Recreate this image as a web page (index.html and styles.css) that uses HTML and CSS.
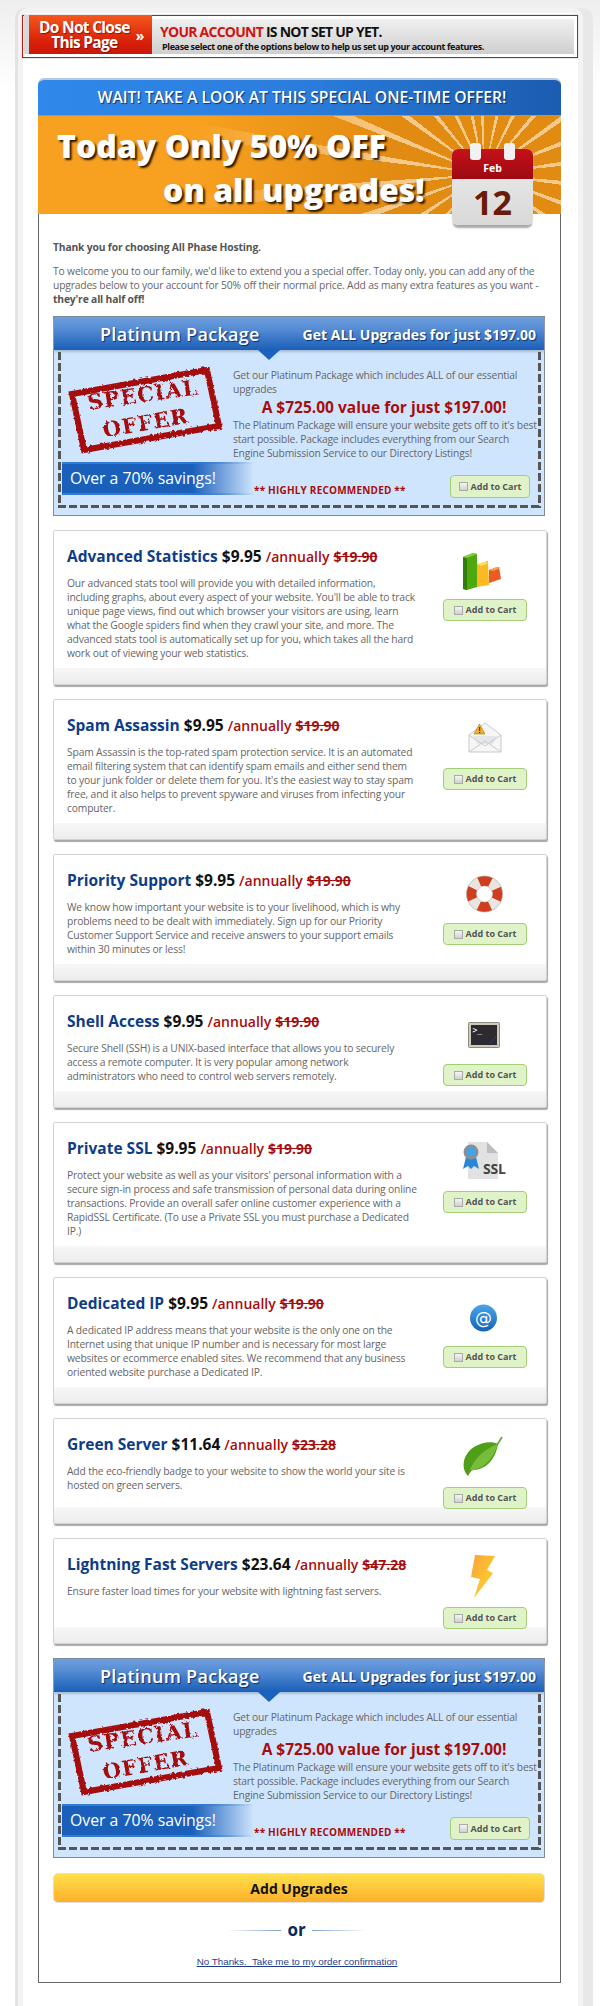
FILE: index.html
```html
<!DOCTYPE html>
<html lang="en">
<head>
<meta charset="utf-8">
<title>Special one-time offer</title>
<link rel="stylesheet" href="styles.css">
</head>
<body>
<div class="frame">
  <header class="alert">
    <div class="alert-tab"><span class="alert-tab-text">Do Not Close<br>This Page</span><span class="alert-arrows">»</span></div>
    <div class="alert-msg">
      <p class="alert-head"><span class="alert-red">YOUR ACCOUNT</span> IS NOT SET UP YET.</p>
      <p class="alert-sub">Please select one of the options below to help us set up your account features.</p>
    </div>
  </header>

  <main class="box">
    <div class="wait">WAIT! TAKE A LOOK AT THIS SPECIAL ONE-TIME OFFER!</div>
    <div class="hero">
      <h1 class="hero-title"><span class="hero-l1">Today Only 50% OFF</span><span class="hero-l2">on all upgrades!</span></h1>
      <div class="cal">
        <i class="cal-ring cal-ring-a"></i><i class="cal-ring cal-ring-b"></i>
        <div class="cal-top">Feb</div>
        <div class="cal-day">12</div>
      </div>
    </div>

    <div class="content">
      <p class="thanks">Thank you for choosing All Phase Hosting.</p>
      <p class="intro">To welcome you to our family, we'd like to extend you a special offer. Today only, you can add any of the upgrades below to your account for 50% off their normal price. Add as many extra features as you want - <b>they're all half off!</b></p>

      <section class="plat">
        <div class="plat-head"><span class="plat-title">Platinum Package</span><span class="plat-sub">Get ALL Upgrades for just $197.00</span></div>
        <div class="plat-body">
          <div class="plat-main">
            <svg class="stamp" viewBox="0 0 160 90" width="160" height="90" aria-hidden="true">
              <defs><filter id="rough" x="-5%" y="-5%" width="110%" height="110%"><feTurbulence type="fractalNoise" baseFrequency=".3" numOctaves="2" seed="4"/><feDisplacementMap in="SourceGraphic" scale="3.5"/></filter></defs>
              <g class="stamp-ink">
                <polygon class="stamp-box" points="6,28 141,4 153,60 18,84"/>
                <text class="stamp-text" x="78" y="36" transform="rotate(-8 78 36)">SPECIAL</text>
                <text class="stamp-text" x="81" y="64" transform="rotate(-10 81 64)">OFFER</text>
              </g>
            </svg>
            <div class="plat-text">
              <p>Get our Platinum Package which includes ALL of our essential upgrades</p>
              <p class="plat-value">A $725.00 value for just $197.00!</p>
              <p>The Platinum Package will ensure your website gets off to it's best start possible. Package includes everything from our Search Engine Submission Service to our Directory Listings!</p>
            </div>
          </div>
          <div class="plat-foot">
            <div class="savings">Over a 70% savings!</div>
            <div class="reco">** HIGHLY RECOMMENDED **</div>
            <label class="cart cart-plat"><input type="checkbox" class="check">Add to Cart</label>
          </div>
          <div class="dash"></div>
        </div>
      </section>

      <article class="card">
        <div class="card-text">
          <h2 class="card-title"><span class="name">Advanced Statistics</span> <span class="price">$9.95</span> <span class="per">/annually</span> <s class="old">$19.90</s></h2>
          <p>Our advanced stats tool will provide you with detailed information, including graphs, about every aspect of your website. You'll be able to track unique page views, find out which browser your visitors are using, learn what the Google spiders find when they crawl your site, and more. The advanced stats tool is automatically set up for you, which takes all the hard work out of viewing your web statistics.</p>
        </div>
        <div class="card-side">
          <svg class="icon" viewBox="0 0 50 50" width="50" height="50" aria-hidden="true">
            <polygon points="3,12 13,8 17,9 17,42 7,45 3,44" fill="#4fa80f"/><polygon points="3,12 7,13 7,45 3,44" fill="#2f7f08"/><polygon points="3,12 13,8 17,9 7,13" fill="#86cf3c"/>
            <polygon points="17,19 28,16 29,40 17,42" fill="#fbb924"/><polygon points="17,19 24,17 29,18 21,21" fill="#ffe069"/>
            <polygon points="29,25 39,22 41,34 29,38" fill="#ea5a22"/><polygon points="29,25 36,22 41,23 33,26" fill="#f9a04a"/>
          </svg>
          <label class="cart"><input type="checkbox" class="check">Add to Cart</label>
        </div>
      </article>

      <article class="card">
        <div class="card-text">
          <h2 class="card-title"><span class="name">Spam Assassin</span> <span class="price">$9.95</span> <span class="per">/annually</span> <s class="old">$19.90</s></h2>
          <p>Spam Assassin is the top-rated spam protection service. It is an automated email filtering system that can identify spam emails and either send them to your junk folder or delete them for you. It's the easiest way to stay spam free, and it also helps to prevent spyware and viruses from infecting your computer.</p>
        </div>
        <div class="card-side">
          <svg class="icon" viewBox="0 0 50 50" width="50" height="50" aria-hidden="true">
            <polygon points="9,21 25,9 41,21 41,38 9,38" fill="#f6f6f6" stroke="#c6c9cc"/>
            <polygon points="13,22 37,22 33,30 17,30" fill="#e4e7e9"/>
            <path d="M9 38 L25 27 L41 38 M9 21 L25 32 L41 21" fill="none" stroke="#c6c9cc"/>
            <polygon points="19.5,10 25,20 14,20" fill="#f2b01e" stroke="#a9781a" stroke-width=".6"/>
            <rect x="19" y="13" width="1.2" height="4" fill="#5a3a08"/><rect x="19" y="18" width="1.2" height="1.2" fill="#5a3a08"/>
          </svg>
          <label class="cart"><input type="checkbox" class="check">Add to Cart</label>
        </div>
      </article>

      <article class="card">
        <div class="card-text">
          <h2 class="card-title"><span class="name">Priority Support</span> <span class="price">$9.95</span> <span class="per">/annually</span> <s class="old">$19.90</s></h2>
          <p>We know how important your website is to your livelihood, which is why problems need to be dealt with immediately. Sign up for our Priority Customer Support Service and receive answers to your support emails within 30 minutes or less!</p>
        </div>
        <div class="card-side">
          <svg class="icon" viewBox="0 0 50 50" width="50" height="50" aria-hidden="true">
            <circle cx="24.5" cy="25" r="13" fill="none" stroke="#e9e6e2" stroke-width="10"/>
            <circle cx="24.5" cy="25" r="13" fill="none" stroke="#cf3e1e" stroke-width="10" stroke-dasharray="11.5 8.9" stroke-dashoffset="5.75"/>
            <circle cx="24.5" cy="25" r="18" fill="none" stroke="#a9a29a" stroke-width=".6"/>
            <circle cx="24.5" cy="25" r="8" fill="#fff" stroke="#b9b2aa" stroke-width=".6"/>
          </svg>
          <label class="cart"><input type="checkbox" class="check">Add to Cart</label>
        </div>
      </article>

      <article class="card">
        <div class="card-text">
          <h2 class="card-title"><span class="name">Shell Access</span> <span class="price">$9.95</span> <span class="per">/annually</span> <s class="old">$19.90</s></h2>
          <p>Secure Shell (SSH) is a UNIX-based interface that allows you to securely access a remote computer. It is very popular among network administrators who need to control web servers remotely.</p>
        </div>
        <div class="card-side">
          <svg class="icon" viewBox="0 0 50 50" width="50" height="50" aria-hidden="true">
            <rect x="8.5" y="12.5" width="31" height="25" rx="1" fill="#cfcabb" stroke="#8f8b7e"/>
            <rect x="11" y="15" width="26" height="20" fill="#2c2b31"/>
            <text class="term-text" x="12.5" y="23">&gt;_</text>
            <path d="M30 33 L36 27" stroke="#3a5fb0" stroke-dasharray="1 1.5"/>
          </svg>
          <label class="cart"><input type="checkbox" class="check">Add to Cart</label>
        </div>
      </article>

      <article class="card">
        <div class="card-text">
          <h2 class="card-title"><span class="name">Private SSL</span> <span class="price">$9.95</span> <span class="per">/annually</span> <s class="old">$19.90</s></h2>
          <p>Protect your website as well as your visitors' personal information with a secure sign-in process and safe transmission of personal data during online transactions. Provide an overall safer online customer experience with a RapidSSL Certificate. (To use a Private SSL you must purchase a Dedicated IP.)</p>
        </div>
        <div class="card-side">
          <svg class="icon" viewBox="0 0 50 50" width="50" height="50" aria-hidden="true">
            <path d="M8 5 H27 L38 16 V42 H8 Z" fill="#e2e2e2"/><path d="M27 5 L38 16 H27 Z" fill="#bdbdbd"/>
            <polygon points="6,20 3,32 8,29 11,32 14,29 19,32 16,20" fill="#2b86d8"/>
            <circle cx="11" cy="15" r="7.5" fill="#8b8f94"/><circle cx="11" cy="15" r="4.5" fill="#3fa4ea"/>
            <text class="ssl-text" x="23" y="37">SSL</text>
          </svg>
          <label class="cart"><input type="checkbox" class="check">Add to Cart</label>
        </div>
      </article>

      <article class="card">
        <div class="card-text">
          <h2 class="card-title"><span class="name">Dedicated IP</span> <span class="price">$9.95</span> <span class="per">/annually</span> <s class="old">$19.90</s></h2>
          <p>A dedicated IP address means that your website is the only one on the Internet using that unique IP number and is necessary for most large websites or ecommerce enabled sites. We recommend that any business oriented website purchase a Dedicated IP.</p>
        </div>
        <div class="card-side">
          <svg class="icon" viewBox="0 0 50 50" width="50" height="50" aria-hidden="true">
            <defs><linearGradient id="at" x1="0" y1="0" x2="0" y2="1"><stop offset="0" stop-color="#4aa6ea"/><stop offset="1" stop-color="#1562b4"/></linearGradient></defs>
            <circle cx="23.5" cy="26" r="13.5" fill="url(#at)"/>
            <text class="at-text" x="23.5" y="32">@</text>
          </svg>
          <label class="cart"><input type="checkbox" class="check">Add to Cart</label>
        </div>
      </article>

      <article class="card">
        <div class="card-text">
          <h2 class="card-title"><span class="name">Green Server</span> <span class="price">$11.64</span> <span class="per">/annually</span> <s class="old">$23.28</s></h2>
          <p>Add the eco-friendly badge to your website to show the world your site is hosted on green servers.</p>
        </div>
        <div class="card-side">
          <svg class="icon" viewBox="0 0 50 50" width="50" height="50" aria-hidden="true">
            <path d="M8 43 C1 36 2 22 14 14 C22 9 32 8 38 11 C36 24 28 36 14 37 C11 37 10 40 8 43 Z" fill="#4f9f18"/>
            <path d="M10 37 C14 26 24 16 38 11 C34 24 26 34 14 37 Z" fill="#76bd3c"/>
            <path d="M37 12 L42 4" stroke="#5fa825" stroke-width="1.6"/>
          </svg>
          <label class="cart"><input type="checkbox" class="check">Add to Cart</label>
        </div>
      </article>

      <article class="card">
        <div class="card-text">
          <h2 class="card-title"><span class="name">Lightning Fast Servers</span> <span class="price">$23.64</span> <span class="per">/annually</span> <s class="old">$47.28</s></h2>
          <p>Ensure faster load times for your website with lightning fast servers.</p>
        </div>
        <div class="card-side">
          <svg class="icon" viewBox="0 0 50 50" width="50" height="50" aria-hidden="true">
            <defs><linearGradient id="bolt" x1="0" y1="0" x2="1" y2="1"><stop offset="0" stop-color="#f6a23c"/><stop offset=".6" stop-color="#ffc42e"/><stop offset="1" stop-color="#f39a12"/></linearGradient></defs>
            <polygon points="15,2 35,3 27,17 33,20 14,45 20,26 11,24" fill="url(#bolt)"/>
          </svg>
          <label class="cart"><input type="checkbox" class="check">Add to Cart</label>
        </div>
      </article>

      <section class="plat plat-last">
        <div class="plat-head"><span class="plat-title">Platinum Package</span><span class="plat-sub">Get ALL Upgrades for just $197.00</span></div>
        <div class="plat-body">
          <div class="plat-main">
            <svg class="stamp" viewBox="0 0 160 90" width="160" height="90" aria-hidden="true">
              <g class="stamp-ink">
                <polygon class="stamp-box" points="6,28 141,4 153,60 18,84"/>
                <text class="stamp-text" x="78" y="36" transform="rotate(-8 78 36)">SPECIAL</text>
                <text class="stamp-text" x="81" y="64" transform="rotate(-10 81 64)">OFFER</text>
              </g>
            </svg>
            <div class="plat-text">
              <p>Get our Platinum Package which includes ALL of our essential upgrades</p>
              <p class="plat-value">A $725.00 value for just $197.00!</p>
              <p>The Platinum Package will ensure your website gets off to it's best start possible. Package includes everything from our Search Engine Submission Service to our Directory Listings!</p>
            </div>
          </div>
          <div class="plat-foot">
            <div class="savings">Over a 70% savings!</div>
            <div class="reco">** HIGHLY RECOMMENDED **</div>
            <label class="cart cart-plat"><input type="checkbox" class="check">Add to Cart</label>
          </div>
          <div class="dash"></div>
        </div>
      </section>

      <button class="add" type="button">Add Upgrades</button>
      <div class="or"><span class="or-line or-left"></span><span class="or-word">or</span><span class="or-line or-right"></span></div>
      <p class="nothanks"><a href="#">No Thanks.&nbsp; Take me to my order confirmation</a></p>
    </div>
  </main>
</div>
</body>
</html>
```

FILE: styles.css
```css
* { box-sizing: border-box; }
html, body { margin: 0; padding: 0; }
body {
  background: linear-gradient(#eeeeee, #ffffff 90px) no-repeat;
  font-family: "Open Sans", sans-serif;
  font-size: 10.3px;
  line-height: 14px;
  letter-spacing: -.16px;
  color: #666;
}
p { margin: 0; }

.frame {
  margin: 8px 17px 0 18px;
  padding: 2px 0 24px;
  background: #fff;
  border: 5px solid #f3f3f3;
  border-bottom: 0;
  border-radius: 10px 10px 0 0;
  box-shadow: -3px 0 0 #e3e3e3, 10px 0 0 #e8e8e8;
}

/* alert bar */
.alert {
  display: flex;
  height: 43px;
  margin-left: -1px;
  padding: 1px;
  background: #fff;
  border: 1px solid #d3130f;
  outline: 1px solid #e8e8e8;
}
.alert-tab {
  display: flex;
  align-items: center;
  flex: none;
  width: 123px;
  margin: -2px 0 2px 5px;
  padding-left: 10px;
  background: linear-gradient(#f4581e, #d81f08 70%, #c9190a);
  color: #fff;
  box-shadow: -5px 0 0 #d8d8d8;
}
.alert-tab-text {
  font-weight: 700;
  font-size: 15.5px;
  line-height: 15px;
  letter-spacing: -.7px;
  text-align: center;
  text-shadow: 1px 1px 1px rgba(90,0,0,.6);
}
.alert-arrows { margin-left: 6px; font-size: 14px; font-weight: 700; line-height: 14px; padding-top: 2px; }
.alert-msg {
  flex: 1;
  padding: 5px 0 0 8px;
  background: linear-gradient(#f0f0f0, #cfcfcf);
  border: 2px solid #fff;
  border-left: 0;
  color: #111;
}
.alert-head { font-size: 14px; line-height: 16px; font-weight: 700; letter-spacing: -.75px; }
.alert-red { color: #d3130f; }
.alert-sub { font-size: 9px; line-height: 13px; font-weight: 700; letter-spacing: -.38px; margin-left: 2px; }

/* outer box */
.box {
  width: 523px;
  margin: 20px 0 0 15px;
  border: 1px solid #666;
  border-top: 0;
  border-radius: 7px 7px 0 0;
}
.wait {
  height: 37px;
  margin: 0 -1px;
  padding-left: 5px;
  border-top: 2px solid #b7cbe0;
  border-radius: 7px 7px 0 0;
  background: linear-gradient(to right, #2f88ea, #2b7ddd 50%, #1a5cb0);
  color: #fff;
  font-weight: 600;
  font-size: 15.7px;
  letter-spacing: 0;
  line-height: 35px;
  text-align: center;
  text-shadow: 1px 1px 1px rgba(0,30,80,.8);
}
.hero {
  position: relative;
  height: 99px;
  margin: 0 -1px;
  padding-top: 8px;
  border-top: 1px solid #6aa3de;
  background:
    linear-gradient(to right, #f8a01f 30%, rgba(248,160,31,0) 68%),
    repeating-conic-gradient(from -3deg at 446px 58px, #f5c98a 0 3deg, rgba(0,0,0,0) 3deg 14deg),
    #e28b12;
}
.hero-title {
  margin: 0;
  color: #fff;
  font-weight: 800;
  font-size: 32px;
  letter-spacing: 0;
  line-height: 44px;
  text-shadow: 2px 2px 2px #2b1600;
}
.hero-l1, .hero-l2 { display: block; white-space: nowrap; }
.hero-l1 { padding-left: 19px; }
.hero-l2 { padding-left: 125px; }

/* calendar */
.cal {
  position: absolute;
  left: 414px;
  top: 33px;
  width: 81px;
  height: 76px;
  border-radius: 6px;
  background: linear-gradient(#ececec, #d9d9d9);
  box-shadow: 0 4px 2px -1px #a9a9a9;
  letter-spacing: 0;
}
.cal-top {
  height: 30px;
  padding-top: 12px;
  border-radius: 6px 6px 0 0;
  background: linear-gradient(#c7111a, #9c0a12);
  color: #fff;
  font-weight: 700;
  font-size: 10.5px;
  line-height: 14px;
  text-align: center;
}
.cal-day {
  color: #6a1a08;
  font-weight: 700;
  font-size: 34px;
  line-height: 46px;
  text-align: center;
}
.cal-ring {
  position: absolute;
  top: -6px;
  width: 11px;
  height: 17px;
  border-radius: 3px;
  background: #f1f1f1;
}
.cal-ring-a { left: 18px; }
.cal-ring-b { left: 52px; }

/* content */
.content { padding: 26px 13px 0 14px; }
.thanks { font-weight: 700; color: #555; }
.intro { margin-top: 10px; width: 494px; }
.intro b { color: #555; }

/* platinum */
.plat {
  width: 492px;
  margin: 10px 0 14px;
  border: 1px solid #7f8a99;
  background: #cfe5fd;
}
.plat-last { margin: 14px 0 0; }
.plat-head {
  position: relative;
  display: flex;
  justify-content: space-between;
  align-items: center;
  height: 33px;
  padding: 0 8px 0 46px;
  background: linear-gradient(#6d9fde, #5b90d6 30%, #1a5fb8);
  color: #fff;
  letter-spacing: 0;
  text-shadow: 1px 1px 1px rgba(0,30,80,.8);
  box-shadow: 0 2px 2px #a9bdd5;
}
.plat-head::after {
  content: "";
  position: absolute;
  left: 204px;
  top: 33px;
  border: 11px solid transparent;
  border-top: 10px solid #1a62bd;
  border-bottom: 0;
}
.plat-title { font-weight: 600; font-size: 18px; letter-spacing: .3px; }
.plat-sub { font-weight: 700; font-size: 14px; padding-top: 2px; }
.plat-body { position: relative; height: 165px; padding-top: 18px; }
.plat-main { display: flex; }
.stamp { flex: none; display: block; margin: -2px 7px -2px 12px; }
.stamp-ink { filter: url(#rough); }
.stamp-box { fill: none; stroke: #a50a0e; stroke-width: 6; }
.stamp-text {
  fill: #a50a0e;
  font-family: "DejaVu Serif", serif;
  font-weight: 700;
  font-size: 21px;
  letter-spacing: 1px;
  text-anchor: middle;
}
.plat-text { width: 305px; }
.plat-value {
  color: #a80d0d;
  font-weight: 700;
  font-size: 15.5px;
  letter-spacing: 0;
  line-height: 22px;
  text-align: center;
  padding-right: 3px;
}
.plat-foot {
  display: flex;
  align-items: flex-end;
  height: 36px;
  margin-top: 2px;
}
.savings {
  align-self: flex-start;
  width: 192px;
  height: 33px;
  margin-left: 8px;
  padding-left: 8px;
  border-top: 2px solid #3a80d8;
  border-bottom: 2px solid #3a80d8;
  border-image: linear-gradient(to right, #2f7bd6 60%, rgba(47,123,214,0)) 1;
  background: linear-gradient(to right, #1a60bb 68%, rgba(26,96,187,0));
  color: #fff;
  font-size: 15.8px;
  letter-spacing: 0;
  line-height: 28px;
  white-space: nowrap;
}
.reco {
  margin: 0 0 1px 0;
  color: #a80d0d;
  font-weight: 700;
  font-size: 10px;
  letter-spacing: .2px;
  white-space: nowrap;
}
.dash {
  position: absolute;
  inset: 2px 3px 7px 4px;
  pointer-events: none;
  background:
    repeating-linear-gradient(to bottom, #555 0 8px, rgba(0,0,0,0) 8px 11px) left top / 3px 100% no-repeat,
    repeating-linear-gradient(to bottom, #555 0 8px, rgba(0,0,0,0) 8px 11px) right top / 3px 100% no-repeat,
    repeating-linear-gradient(to right, #555 0 8px, rgba(0,0,0,0) 8px 11px) left bottom / 100% 3px no-repeat;
}

/* cart button */
.cart {
  display: flex;
  align-items: center;
  justify-content: center;
  gap: 3px;
  width: 84px;
  height: 22px;
  border: 1px solid #a3cd77;
  border-radius: 4px;
  background: #e0f3c8;
  color: #555;
  font-weight: 700;
  font-size: 9px;
  letter-spacing: 0;
  line-height: 12px;
  white-space: nowrap;
}
.cart-plat { width: 80px; height: 23px; margin: 0 14px 0 auto; }
.check {
  appearance: none;
  flex: none;
  width: 9px;
  height: 9px;
  margin: 0;
  border: 1px solid #aaa;
  background: linear-gradient(#f5f5f5, #cfcfcf);
}

/* upgrade cards */
.card {
  display: flex;
  justify-content: space-between;
  width: 494px;
  margin-bottom: 14px;
  padding: 14px 19px 14px 13px;
  border: 1px solid #d2d2d2;
  background: linear-gradient(#f7f7f7, #ececec) left bottom / 100% 16px no-repeat #fff;
  box-shadow: 1px 2px 1px #a8a8a8;
  border-radius: 2px;
}
.card:last-of-type { margin-bottom: 0; }
.card-text { width: 350px; padding-bottom: 10px; }
.card-title {
  margin: 0 0 9px;
  font-size: 15.5px;
  letter-spacing: 0;
  line-height: 22px;
  font-weight: 700;
  white-space: nowrap;
}
.name { color: #0d3d86; }
.price { color: #111; }
.per { color: #a80d0d; font-size: 14px; font-weight: 600; line-height: 1; }
.old { color: #a80d0d; font-size: 14px; line-height: 1; }
.card-side { flex: none; width: 84px; }
.icon { display: block; margin: 0 auto 4px; overflow: visible; }
.term-text { fill: #fff; font-family: "DejaVu Sans Mono", monospace; font-size: 8px; }
.ssl-text { fill: #444; font-family: "Open Sans", sans-serif; font-weight: 700; font-size: 14px; }
.at-text { fill: #fff; font-family: "DejaVu Sans", sans-serif; font-size: 17px; text-anchor: middle; }

/* footer actions */
.add {
  display: block;
  width: 492px;
  height: 30px;
  margin-top: 15px;
  padding: 0;
  border: 1px solid #e0e0e0;
  border-radius: 5px;
  background: linear-gradient(#ffe04a, #fdb02a);
  color: #111;
  font-family: "Open Sans", sans-serif;
  font-weight: 700;
  font-size: 14px;
}
.or {
  display: flex;
  align-items: center;
  justify-content: center;
  gap: 6px;
  height: 22px;
  margin-top: 16px;
  padding-right: 7px;
}
.or-word { color: #0a2a5e; font-weight: 700; font-size: 17px; letter-spacing: 0; line-height: 22px; }
.or-line { width: 55px; height: 1px; }
.or-left { background: linear-gradient(to right, rgba(90,130,190,0), #7a9ccc); }
.or-right { background: linear-gradient(to left, rgba(90,130,190,0), #7a9ccc); }
.nothanks {
  margin-top: 14px;
  padding-bottom: 13px;
  padding-right: 6px;
  text-align: center;
  font-family: "Liberation Sans", Arial, sans-serif;
  font-size: 9.8px;
  letter-spacing: 0;
  line-height: 14px;
}
.nothanks a { color: #1f3f8a; }
```
